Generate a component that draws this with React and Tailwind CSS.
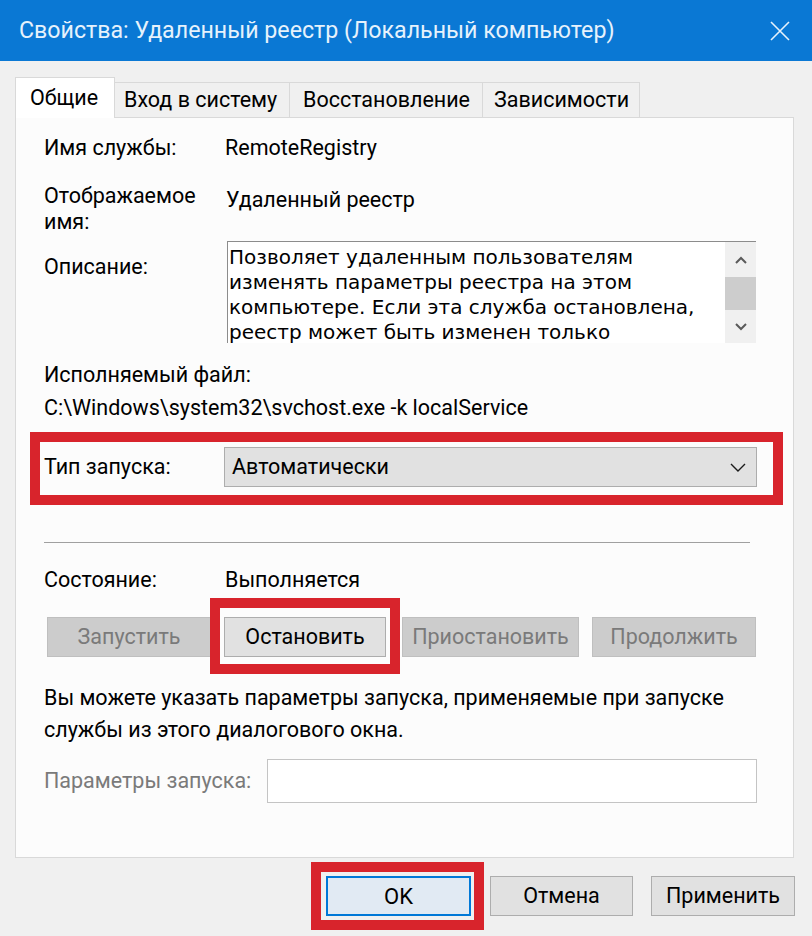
import React from "react";

function Btn({ children, className = "", disabled = false }) {
  return (
    <div
      className={
        "h-[40px] flex items-center justify-center border text-[21.5px] " +
        (disabled
          ? "bg-[#cccccc] border-[#bfbfbf] text-[#7a7a7a] "
          : "bg-[#e1e1e1] border-[#adadad] text-black ") +
        className
      }
    >
      {children}
    </div>
  );
}

export default function App() {
  return (
    <div className="w-[812px] h-[936px] bg-[#f0f0f0] font-['Roboto',sans-serif] text-black relative overflow-hidden flex flex-col">
      {/* Title bar */}
      <div className="h-[61px] shrink-0 bg-[#0a78d4] flex items-center justify-between pl-[19px] pr-[22px]">
        <span className="text-[#e6f2fc] text-[23.2px] leading-none">
          Свойства: Удаленный реестр (Локальный компьютер)
        </span>
        <svg width="20" height="20" viewBox="0 0 20 20" fill="none">
          <path d="M1 1L19 19M19 1L1 19" stroke="#e6f2fc" strokeWidth="1.6" />
        </svg>
      </div>

      {/* Tabs */}
      <div className="h-[56px] shrink-0 flex items-end pl-[15px]">
        <div className="relative z-10 -mb-px w-[100px] h-[41px] bg-white border border-b-0 border-[#d9d9d9] pl-[14px] flex items-center text-[21.5px]">
          Общие
        </div>
        <div className="w-[175px] h-[35px] bg-[#f0f0f0] border border-l-0 border-b-0 border-[#d9d9d9] pl-[9px] flex items-center text-[21.5px]">
          Вход в систему
        </div>
        <div className="w-[193px] h-[35px] bg-[#f0f0f0] border border-l-0 border-b-0 border-[#d9d9d9] pl-[13px] flex items-center text-[21.5px]">
          Восстановление
        </div>
        <div className="w-[157px] h-[35px] bg-[#f0f0f0] border border-l-0 border-b-0 border-[#d9d9d9] pl-[11px] flex items-center text-[21.5px]">
          Зависимости
        </div>
      </div>

      {/* Panel */}
      <div className="relative ml-[15px] w-[779px] h-[741px] shrink-0 bg-[#fcfcfc] border border-[#d9d9d9] pl-[28px] pr-[36px] pt-[15px] flex flex-col text-[21.5px]">
        {/* Service name */}
        <div className="h-[30px] flex items-center">
          <div className="w-[181px]">Имя службы:</div>
          <div>RemoteRegistry</div>
        </div>

        {/* Display name */}
        <div className="mt-[20px] flex">
          <div className="w-[182px] leading-[26px]">
            Отображаемое
            <br />
            имя:
          </div>
          <div className="leading-[26px] pt-[4px]">Удаленный реестр</div>
        </div>

        {/* Description */}
        <div className="mt-[6px] flex">
          <div className="w-[183px] pt-[13px] leading-[26px]">Описание:</div>
          <div className="w-[529px] h-[102px] flex border-t border-l border-[#8c8c8c] bg-white">
            <div className="flex-1 whitespace-nowrap pl-[1px] pt-[3px] font-['DejaVu_Sans',sans-serif] text-[20px] leading-[25px] text-black">
              Позволяет удаленным пользователям
              <br />
              изменять параметры реестра на этом
              <br />
              компьютере. Если эта служба остановлена,
              <br />
              реестр может быть изменен только
            </div>
            <div className="w-[31px] h-full bg-[#f0f0f0] flex flex-col items-center">
              <div className="h-[35px] w-full flex items-center justify-center">
                <svg width="12" height="8" viewBox="0 0 12 8" fill="none">
                  <path d="M1 7L6 2L11 7" stroke="#5a5a5a" strokeWidth="2" />
                </svg>
              </div>
              <div className="h-[33px] w-full bg-[#cdcdcd]" />
              <div className="flex-1 w-full flex items-center justify-center">
                <svg width="12" height="8" viewBox="0 0 12 8" fill="none">
                  <path d="M1 1L6 6L11 1" stroke="#5a5a5a" strokeWidth="2" />
                </svg>
              </div>
            </div>
          </div>
        </div>

        {/* Executable */}
        <div className="mt-[19px] leading-[26px]">Исполняемый файл:</div>
        <div className="mt-[7px] leading-[26px]">
          C:\Windows\system32\svchost.exe -k localService
        </div>

        {/* Startup type */}
        <div className="mt-[26px] h-[40px] flex items-center">
          <div className="w-[180px]">Тип запуска:</div>
          <div className="w-[533px] h-[40px] bg-[#e1e1e1] border border-[#adadad] flex items-center justify-between pl-[7px] pr-[10px]">
            <span>Автоматически</span>
            <svg width="16" height="9" viewBox="0 0 16 9" fill="none">
              <path d="M1 1L8 8L15 1" stroke="#1a1a1a" strokeWidth="1.4" />
            </svg>
          </div>
        </div>

        {/* Separator */}
        <div className="mt-[55px] h-px w-[706px] bg-[#a0a0a0]" />

        {/* Status */}
        <div className="mt-[24px] h-[26px] flex items-center">
          <div className="w-[181px]">Состояние:</div>
          <div>Выполняется</div>
        </div>

        {/* Service buttons */}
        <div className="mt-[24px] flex">
          <Btn disabled className="ml-[3px] w-[164px]">Запустить</Btn>
          <Btn className="ml-[13px] w-[162px]">Остановить</Btn>
          <Btn disabled className="ml-[16px] w-[177px]">Приостановить</Btn>
          <Btn disabled className="ml-[13px] w-[164px]">Продолжить</Btn>
        </div>

        {/* Hint text */}
        <div className="mt-[25px] leading-[32px]">
          Вы можете указать параметры запуска, применяемые при запуске
          <br />
          службы из этого диалогового окна.
        </div>

        {/* Params */}
        <div className="mt-[13px] h-[44px] flex items-center">
          <div className="w-[223px] text-[#7a7a7a]">Параметры запуска:</div>
          <div className="w-[490px] h-[44px] bg-white border border-[#c4c4c4]" />
        </div>
      </div>

      {/* Bottom buttons */}
      <div className="mt-[18px] flex justify-end pr-[17px]">
        <div className="w-[145px] h-[40px] flex items-center justify-center border-2 border-[#0078d7] bg-[#e1eaf3] text-[22px]">
          OK
        </div>
        <div className="ml-[19px] w-[143px] h-[40px] flex items-center justify-center border border-[#adadad] bg-[#e1e1e1] text-[21.5px]">
          Отмена
        </div>
        <div className="ml-[18px] w-[144px] h-[40px] flex items-center justify-center border border-[#adadad] bg-[#e1e1e1] text-[21.5px]">
          Применить
        </div>
      </div>

      {/* Red annotation boxes */}
      <div className="absolute left-[30px] top-[432px] w-[753px] h-[73px] border-[10px] border-[#d8242c] pointer-events-none" />
      <div className="absolute left-[210px] top-[598px] w-[190px] h-[76px] border-[10px] border-[#d8242c] pointer-events-none" />
      <div className="absolute left-[311px] top-[862px] w-[173px] h-[68px] border-[10px] border-[#d8242c] pointer-events-none" />
    </div>
  );
}
